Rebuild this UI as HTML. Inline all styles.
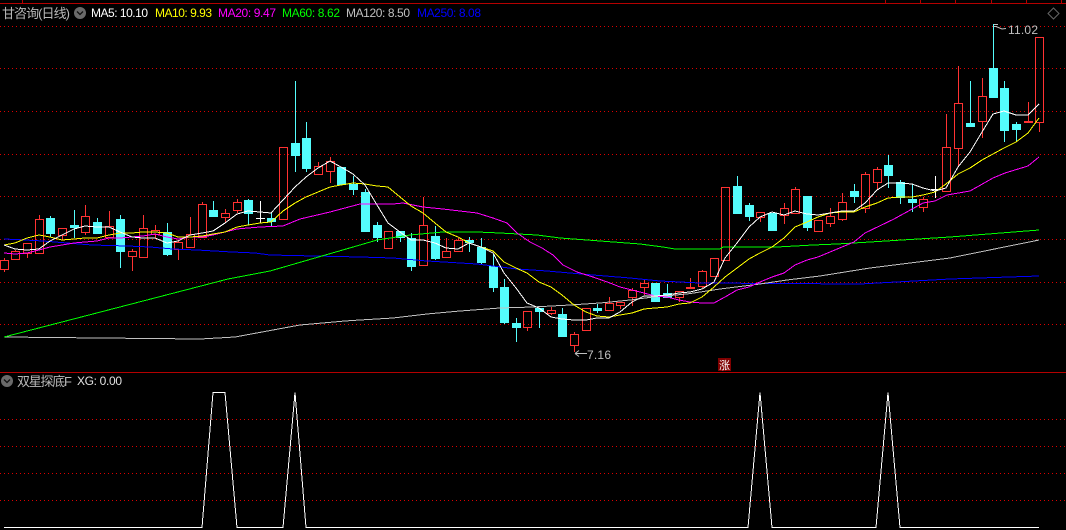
<!DOCTYPE html>
<html><head><meta charset="utf-8"><title>K</title>
<style>
html,body{margin:0;padding:0;background:#000;width:1066px;height:530px;overflow:hidden}
svg{display:block}
text{font-family:"Liberation Sans","WenQuanYi Zen Hei","Noto Sans CJK SC",sans-serif}
</style></head><body>
<svg width="1066" height="530" viewBox="0 0 1066 530" xmlns="http://www.w3.org/2000/svg">
<rect width="1066" height="530" fill="#000"/>
<g shape-rendering="crispEdges">
<path d="M0 3.5H1066M22.5 0V3M885.5 0V3M920.5 0V3M955.5 0V3M991.5 0V3M1026.5 0V3M1061.5 0V3M0 372.5H1066" stroke="#b40000" fill="none"/>
<path d="M0 26.5H1066M0 68.5H1066M0 111.5H1066M0 154.5H1066M0 196.5H1066M0 239.5H1066M0 282.5H1066M0 324.5H1066M0 419.5H1066M0 446.5H1066M0 473.5H1066M0 500.5H1066" stroke="#dc0000" stroke-dasharray="1 3" fill="none"/>
<path fill="none" stroke="#ff3232" d="
M4.5 258V260M.5 260.5H8.5V269.5H.5ZM4.5 270V272
M15.5 250V251M11.5 251.5H19.5V259.5H11.5ZM15.5 260V260
M23.5 243.5H31.5V253.5H23.5ZM27.5 254V258
M39.5 215V219M35.5 219.5H43.5V253.5H35.5Z
M58.5 228.5H66.5V235.5H58.5ZM62.5 236V240
M85.5 205V216M81.5 216.5H89.5V232.5H81.5ZM85.5 233V235
M109.5 211V226M105.5 226.5H113.5V237.5H105.5Z
M132.5 249V251M128.5 251.5H136.5V256.5H128.5ZM132.5 257V271
M143.5 215V228M139.5 228.5H147.5V257.5H139.5Z
M155.5 225V230M151.5 230.5H159.5V234.5H151.5ZM155.5 235V238
M178.5 240V242M174.5 242.5H182.5V249.5H174.5ZM178.5 250V260
M190.5 217V234M186.5 234.5H194.5V247.5H186.5Z
M202.5 202V204M198.5 204.5H206.5V237.5H198.5Z
M225.5 209V213M221.5 213.5H229.5V217.5H221.5ZM225.5 218V222
M237.5 199V202M233.5 202.5H241.5V210.5H233.5ZM237.5 211V213
M279.5 147.5H287.5V219.5H279.5Z
M318.5 162V166M314.5 166.5H322.5V174.5H314.5ZM318.5 175V175
M330.5 157V161M326.5 161.5H334.5V171.5H326.5ZM330.5 172V183
M384.5 231.5H392.5V248.5H384.5ZM388.5 249V249
M423.5 197V225M419.5 225.5H427.5V265.5H419.5Z
M446.5 238V251M442.5 251.5H450.5V257.5H442.5Z
M458.5 238V240M454.5 240.5H462.5V251.5H454.5ZM458.5 252V252
M523.5 311.5H531.5V327.5H523.5ZM527.5 328V331
M551.5 307V310M547.5 310.5H555.5V313.5H547.5ZM551.5 314V315
M574.5 332V334M570.5 334.5H578.5V345.5H570.5ZM574.5 346V352
M582.5 308.5H590.5V330.5H582.5Z
M609.5 297V303M605.5 303.5H613.5V310.5H605.5Z
M616.5 302.5H624.5V305.5H616.5ZM620.5 306V309
M632.5 288V290M628.5 290.5H636.5V297.5H628.5ZM632.5 298V306
M644.5 280V283M640.5 283.5H648.5V287.5H640.5ZM644.5 288V295
M675.5 291.5H683.5V297.5H675.5ZM679.5 298V302
M690.5 278V287M686.5 287.5H694.5V288.5H686.5Z
M702.5 270V271M698.5 271.5H706.5V286.5H698.5ZM702.5 287V288
M710.5 258.5H718.5V276.5H710.5Z
M721.5 187.5H729.5V260.5H721.5Z
M756.5 212.5H764.5V217.5H756.5ZM760.5 218V222
M784.5 203V208M780.5 208.5H788.5V215.5H780.5ZM784.5 216V224
M795.5 187V189M791.5 189.5H799.5V213.5H791.5Z
M814.5 220.5H822.5V231.5H814.5Z
M830.5 208V216M826.5 216.5H834.5V223.5H826.5ZM830.5 224V227
M842.5 193V202M838.5 202.5H846.5V219.5H838.5ZM842.5 220V221
M865.5 172V174M861.5 174.5H869.5V208.5H861.5ZM865.5 209V213
M877.5 167V169M873.5 169.5H881.5V182.5H873.5ZM877.5 183V189
M923.5 197V199M919.5 199.5H927.5V207.5H919.5ZM923.5 208V212
M946.5 114V147M942.5 147.5H950.5V191.5H942.5Z
M958.5 66V103M954.5 103.5H962.5V148.5H954.5ZM958.5 149V167
M982.5 78V96M978.5 96.5H986.5V121.5H978.5ZM982.5 122V138
M1028.5 102V121M1024.5 121.5H1032.5V122.5H1024.5Z
M1035.5 37.5H1043.5V122.5H1035.5ZM1039.5 123V132
"/>
<path fill="#54fcfc" stroke="#54fcfc" d="
M50.5 216V218M46.5 218.5H54.5V233.5H46.5ZM50.5 234V237
M74.5 210V225M70.5 225.5H78.5V227.5H70.5ZM74.5 228V238
M97.5 218V222M93.5 222.5H101.5V233.5H93.5ZM97.5 234V234
M120.5 215V219M116.5 219.5H124.5V251.5H116.5ZM120.5 252V268
M167.5 223V232M163.5 232.5H171.5V254.5H163.5ZM167.5 255V256
M213.5 201V210M209.5 210.5H217.5V216.5H209.5Z
M248.5 199V200M244.5 200.5H252.5V213.5H244.5ZM248.5 214V225
M271.5 213V218M267.5 218.5H275.5V221.5H267.5ZM271.5 222V227
M295.5 81V143M291.5 143.5H299.5V155.5H291.5ZM295.5 156V172
M306.5 122V138M302.5 138.5H310.5V168.5H302.5ZM306.5 169V172
M337.5 167.5H345.5V184.5H337.5Z
M353.5 176V184M349.5 184.5H357.5V189.5H349.5ZM353.5 190V195
M365.5 189V192M361.5 192.5H369.5V231.5H361.5Z
M377.5 222V225M373.5 225.5H381.5V237.5H373.5ZM377.5 238V242
M396.5 231.5H404.5V237.5H396.5ZM400.5 238V242
M411.5 233V238M407.5 238.5H415.5V266.5H407.5ZM411.5 267V271
M435.5 226V236M431.5 236.5H439.5V258.5H431.5ZM435.5 259V260
M469.5 237V240M465.5 240.5H473.5V242.5H465.5ZM469.5 243V252
M481.5 238V247M477.5 247.5H485.5V262.5H477.5ZM481.5 263V265
M493.5 254V266M489.5 266.5H497.5V287.5H489.5ZM493.5 288V292
M504.5 279V287M500.5 287.5H508.5V322.5H500.5ZM504.5 323V324
M516.5 318V323M512.5 323.5H520.5V327.5H512.5ZM516.5 328V342
M535.5 308.5H543.5V311.5H535.5ZM539.5 312V328
M562.5 308V314M558.5 314.5H566.5V336.5H558.5Z
M597.5 304V308M593.5 308.5H601.5V310.5H593.5ZM597.5 311V313
M651.5 283.5H659.5V301.5H651.5Z
M667.5 284V293M663.5 293.5H671.5V297.5H663.5ZM667.5 298V298
M737.5 176V186M733.5 186.5H741.5V213.5H733.5ZM737.5 214V214
M749.5 203V205M745.5 205.5H753.5V216.5H745.5ZM749.5 217V221
M768.5 213.5H776.5V230.5H768.5ZM772.5 231V231
M803.5 196.5H811.5V227.5H803.5ZM807.5 228V231
M854.5 184V191M850.5 191.5H858.5V196.5H850.5ZM854.5 197V203
M888.5 155V165M884.5 165.5H892.5V175.5H884.5ZM888.5 176V188
M900.5 180V182M896.5 182.5H904.5V197.5H896.5ZM900.5 198V204
M912.5 184V199M908.5 199.5H916.5V202.5H908.5ZM912.5 203V212
M970.5 81V123M966.5 123.5H974.5V126.5H966.5Z
M993.5 24V68M989.5 68.5H997.5V97.5H989.5Z
M1004.5 81V88M1000.5 88.5H1008.5V130.5H1000.5ZM1004.5 131V142
M1016.5 122V124M1012.5 124.5H1020.5V129.5H1012.5ZM1016.5 130V142
"/>
<path fill="none" stroke="#fff" d="M260.5 201V223M256 218.5H265M935.5 176V198M931 189.5H940"/>
<g fill="none">
<polyline stroke="#0000ff" points="4,239 25,240 43,241 67,243 92,245 127,246 150,247 173,249 197,250 232,252 255,253 270,255 360,257 393,258 427,261 477,264 517,269 547,271 593,275 630,278 660,281 700,283 860,284 950,279 1039,276"/>
<polyline stroke="#c0c0c0" points="4,337 100,338 200,339 235,337 300,325 345,321 360,320 393,318 427,314 460,311 500,308 533,307 570,305 600,303 630,300 653,297 687,294 720,289 760,284 787,280 820,276 870,268 950,258 1039,240"/>
<polyline stroke="#00ff00" points="4,337 228,279 270,271 360,245 377,240 410,235 443,232 477,232 500,233 537,235 560,238 587,240 640,244 663,247 675,249 720,249 723,247 777,247 813,245 837,244 870,242 950,237 1039,230"/>
<polyline stroke="#ff00ff" points="4,253 15,254 27,253 39,250 50,247 62,245 74,243 85,242 97,241 109,238 120,238 132,237 143,236 155,234 167,237 178,239 190,237 202,237 213,235 225,232 237,229 248,228 260,227 283,226 300,219 330,212 345,208 360,204 393,204 403,203 423,207 443,209 460,211 477,213 493,218 507,223 517,233 530,242 542,248 553,255 563,265 577,272 593,277 610,283 620,287 632,290 644,293 655,296 667,297 679,300 690,302 702,303 714,303 725,297 737,290 749,287 760,282 772,277 784,273 795,265 807,260 818,257 830,252 842,247 854,242 865,233 894,219 923,203 935,201 947,195 970,191 993,178 1005,173 1028,166 1039,157"/>
<polyline stroke="#ffff00" points="4,245 15,243 27,238 39,235 50,237 62,240 74,239 85,238 97,238 109,235 120,233 132,233 143,232 155,232 167,233 178,237 190,237 202,236 213,234 225,232 237,227 248,225 260,223 271,222 283,211 295,203 306,197 318,192 330,187 341,185 353,183 365,184 377,186 388,187 400,197 411,206 423,213 435,223 446,232 458,237 469,243 481,247 493,251 504,262 516,268 527,273 539,282 551,287 562,295 574,305 586,312 597,316 609,317 620,315 632,313 644,309 655,308 667,307 679,304 690,303 702,297 714,287 725,277 737,268 749,259 760,253 772,247 784,238 795,227 807,222 818,217 830,213 842,212 854,212 865,207 877,203 888,198 900,197 912,197 923,195 935,192 946,184 958,174 970,168 982,160 993,154 1004,148 1016,142 1028,133 1039,118"/>
<polyline stroke="#ffffff" points="4,245 15,249 27,250 39,249 50,241 62,235 74,229 85,226 97,227 109,227 120,232 132,237 143,238 155,238 167,243 178,241 190,235 202,233 213,231 225,223 237,214 248,211 260,212 271,213 283,200 295,187 306,177 318,168 330,161 341,167 353,174 365,185 377,205 388,223 400,232 411,240 423,240 435,243 446,248 458,249 469,243 481,247 493,253 504,273 516,288 527,303 539,308 551,317 562,319 574,320 586,320 597,318 609,318 620,312 632,302 644,296 655,296 667,295 679,293 690,292 702,289 714,282 725,258 737,243 749,227 760,217 772,212 784,215 795,211 807,214 818,215 830,213 842,211 854,211 865,203 877,190 888,183 900,183 912,184 923,188 935,191 946,188 958,167 970,152 982,132 993,114 1004,111 1016,115 1028,115 1039,104"/>
<polyline stroke="#ffffff" points="4,527.5 202,527.5 213,392.5 225,392.5 237,527.5 283,527.5 295,392.5 306,527.5 748,527.5 760,392.5 772,527.5 876,527.5 888,392.5 900,527.5 1039,527.5"/>
</g>
<rect x="718" y="358" width="13" height="13" fill="#800000"/>
</g>
<circle cx="80" cy="13" r="6" fill="#6a6a6a"/>
<path d="M77 11.5L80 14.5L83 11.5" stroke="#111" stroke-width="1.3" fill="none"/>
<circle cx="7" cy="381" r="6" fill="#6a6a6a"/>
<path d="M4 379.5L7 382.5L10 379.5" stroke="#111" stroke-width="1.3" fill="none"/>
<path d="M1053.5 8L1059 13.5L1053.5 19L1048 13.5Z" stroke="#666" fill="none"/>
<path d="M994 24.5H998M994 26.5H997M996 26.5L1002 29L1006 28.5" stroke="#c0c0c0" fill="none"/>
<path d="M587 353.5H575M575 353.5L579 350.5M575 353.5L579 356.5" stroke="#c0c0c0" fill="none"/>
<text x="2" y="18" font-size="13" fill="#b8b8b8" textLength="68" lengthAdjust="spacing">甘咨询(日线)</text>
<g font-size="12">
<text x="91" y="17" fill="#ffffff" textLength="57" lengthAdjust="spacing">MA5: 10.10</text>
<text x="155" y="17" fill="#ffff00" textLength="57" lengthAdjust="spacing">MA10: 9.93</text>
<text x="218" y="17" fill="#ff00ff" textLength="58" lengthAdjust="spacing">MA20: 9.47</text>
<text x="282" y="17" fill="#00ff00" textLength="58" lengthAdjust="spacing">MA60: 8.62</text>
<text x="346" y="17" fill="#c0c0c0" textLength="64" lengthAdjust="spacing">MA120: 8.50</text>
<text x="417" y="17" fill="#0000ff" textLength="64" lengthAdjust="spacing">MA250: 8.08</text>
<text x="587" y="359" fill="#c0c0c0" textLength="24" lengthAdjust="spacing">7.16</text>
<text x="1008" y="34" fill="#c0c0c0" textLength="30" lengthAdjust="spacing">11.02</text>
<text x="77" y="385" fill="#e0e0e0" textLength="45" lengthAdjust="spacing">XG: 0.00</text>
</g>
<text x="17" y="386" font-size="13" fill="#b8b8b8" textLength="55" lengthAdjust="spacing">双星探底F</text>
<text x="719" y="369" font-size="11" fill="#fff">涨</text>
</svg>
</body></html>
